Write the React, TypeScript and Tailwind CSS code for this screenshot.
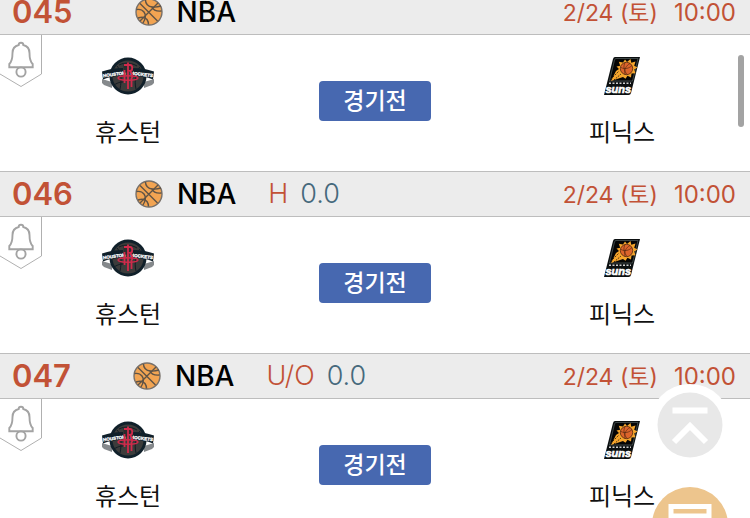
import React from 'react';

type Game = {
  no: string;
  type?: string;
  line?: string;
};

const games: Game[] = [
  { no: '045' },
  { no: '046', type: 'H', line: '0.0' },
  { no: '047', type: 'U/O', line: '0.0' },
];

const BallIcon: React.FC = () => (
  <svg viewBox="0 0 28 28" className="w-7 h-7 shrink-0" fill="none" stroke="#5f5346" strokeWidth="1.4">
    <circle cx="14" cy="14" r="13" fill="#f2a452" stroke="#77706a" />
    <path d="M5 5.500L22.500 23M23 5L5 23" />
    <path d="M10.500 2c0 4 2.500 6.500 7 7 3.500.4 6-.2 8.500-1" />
    <path d="M17 9c1 2.500 4.500 4.500 9.500 4" />
    <path d="M1.500 11.500c3.500-.5 6 .5 7.500 2.500s2 6-1 11" />
    <path d="M3 20c3-1 7-1 9 1.500 1 1.500 1.500 3 1.500 5" />
  </svg>
);

const BellTag: React.FC = () => (
  <svg viewBox="0 0 42 52" className="block w-[42px] h-[52px]" fill="none">
    <path d="M41.500 0v39L21 51.500 0 39" stroke="#b0b0b0" />
    <path
      d="M21 7.800c-1.500 0-2.300.9-2.300 2.200C14.500 11 12.500 14 12.500 18c0 6-.5 8.500-3.200 11v3.300h23.400V29c-2.700-2.500-3.200-5-3.200-11 0-4-2-7-6.200-8 0-1.300-.8-2.200-2.300-2.200z"
      stroke="#a3a3a3"
      strokeWidth="1.900"
    />
    <circle cx="21" cy="37" r="4.600" stroke="#a3a3a3" strokeWidth="1.900" />
  </svg>
);

const RocketsLogo: React.FC = () => (
  <svg viewBox="0 0 52 38" className="w-[52px] h-[38px]">
    <path d="M0 22l10 3v6L2 28l-2-2zM52 22l-10 3v6l8-3 2-2z" fill="#85898c" />
    <circle cx="26" cy="19" r="18.500" fill="#10202a" />
    <circle cx="26" cy="19" r="15.500" fill="#3c3c3b" />
    <path
      d="M15 9c4 4 5 14 3 23M38 10c-4 4-6 14-4 22M17 8c6-3 13-2 18 1M12 28c5-3 7-3 10-3"
      fill="none"
      stroke="#111c24"
      strokeWidth="1"
    />
    <path
      d="M0 14.500c7-2.500 14-3.500 21-3.500v7.500c-7 .3-14 1.500-20 4zM52 14.500c-7-2.500-14-3.500-21-3.500v7.500c7 .3 14 1.500 20 4z"
      fill="#10202a"
    />
    <g fill="#fff" stroke="#fff" strokeWidth=".3" fontFamily="Liberation Sans, sans-serif" fontWeight="700" fontSize="4.500">
      <text x="1" y="19" textAnchor="start" transform="rotate(-7 11 17)">HOUSTON</text>
      <text x="51" y="19" textAnchor="end" transform="rotate(7 41 17)">ROCKETS</text>
    </g>
    <path d="M21.500 6.500h9.500v9h-9.500z" fill="#2a2c2d" />
    <path d="M22 8h6c3 0 3 6 0 6l2 3v4M22.500 13v13M26 5.500V32M29.500 21v9" fill="none" stroke="#d02a4b" strokeWidth="1.800" />
    <ellipse cx="26" cy="21" rx="10" ry="2.300" fill="none" stroke="#d02a4b" strokeWidth="1.400" />
  </svg>
);

const SunsLogo: React.FC = () => (
  <svg viewBox="0 0 38 38" className="w-[38px] h-[38px]">
    <path d="M12 0h25l-9 36q-.5 2-2.500 2H1L10 2q.5-2 2-2z" fill="#0b0f10" />
    <path d="M12.500 1.500h22.500L29.500 24H6.500L11.500 3z" fill="#050505" stroke="#53605f" strokeWidth=".7" />
    <path
      d="M22 2.500l2 2.500 3.500-3 .8 3.800 4.200-1.300-1.300 4.200 3.300 1.800-3.300 2 1.300 3.800-4 .2-.5 4-3.500-1.800-2 3-2.500-1.700L8 24l5-10 3-2-2.500-2.500 3.700-.8-1.400-4 4.200.8z"
      fill="#f5a52c"
    />
    <path d="M8 22l8-8M11 23l7-6" stroke="#2b1c0c" strokeWidth=".9" strokeDasharray="1.500 1.200" />
    <circle cx="23.500" cy="11.500" r="6.200" fill="#dc642b" stroke="#42200e" strokeWidth=".7" />
    <path
      d="M18 10.500c4 2 8 1 11-2M22 5.500c-2 4-1 8 2 12M27 6.500c-4 2-6 6-5 11"
      fill="none"
      stroke="#42200e"
      strokeWidth=".6"
    />
    <path d="M6 26.200h22" stroke="#cfcfcf" strokeWidth="1.500" strokeDasharray="2 1.500" />
    <text
      x="2.500"
      y="36"
      fill="#fff"
      stroke="#fff"
      strokeWidth=".6"
      fontFamily="Liberation Sans, sans-serif"
      fontWeight="700"
      fontStyle="italic"
      fontSize="11"
    >
      suns
    </text>
  </svg>
);

const Team: React.FC<{ name: string; children: React.ReactNode }> = ({ name, children }) => (
  <div className="flex w-64 flex-col items-center pt-[22px]">
    {children}
    <span className="mt-5 text-[24px] leading-9 text-[#111]">{name}</span>
  </div>
);

const GameRow: React.FC<{ game: Game }> = ({ game }) => (
  <li>
    <div className="flex h-[46px] items-center border-y border-[#bdbdbd] bg-[#ececec] pl-3 pr-[14px]">
      <span className="text-[31px] font-semibold text-[#c25236]">{game.no}</span>
      <span className="ml-[62px] flex items-center gap-[14px]">
        <BallIcon />
        <span className="text-[28px] font-medium text-black">NBA</span>
      </span>
      {game.type && <span className="ml-8 text-[27px] font-light text-[#c25236]">{game.type}</span>}
      {game.line && <span className="ml-3 text-[27px] font-light text-[#46697c]">{game.line}</span>}
      <span className="ml-auto flex items-center gap-4 pt-0.5 text-[#c25236]">
        <span className="text-[23px]">2/24 (토)</span>
        <time className="text-[24px]">10:00</time>
      </span>
    </div>
    <div className="relative flex h-[136px] justify-between">
      <button type="button" aria-label="알림" className="absolute left-0 top-0">
        <BellTag />
      </button>
      <Team name="휴스턴">
        <RocketsLogo />
      </Team>
      <button
        type="button"
        className="mt-[46px] h-10 w-28 rounded bg-[#4768b0] text-[23px] leading-10 font-medium text-white"
      >
        경기전
      </button>
      <Team name="피닉스">
        <SunsLogo />
      </Team>
    </div>
  </li>
);

export default function App() {
  return (
    <main className="relative h-screen overflow-hidden bg-white font-['Inter','Noto_Sans_CJK_KR',sans-serif]">
      <ul className="-mt-[11px]">
        {games.map((game) => (
          <GameRow key={game.no} game={game} />
        ))}
      </ul>

      <div className="absolute right-[6px] top-[55px] h-[72px] w-[6px] rounded-full bg-[#a3a3a3]" />

      {/* floating buttons */}
      <div className="absolute right-[19px] top-[384px] flex flex-col items-center gap-[21px]">
        <button type="button" aria-label="맨 위로" className="rounded-full bg-white p-2">
          <svg viewBox="0 0 66 66" className="block h-[66px] w-[66px]">
            <circle cx="33" cy="33" r="32.500" fill="#e8e8e8" />
            <path d="M15.500 18.500h35M17 50l16-16 16 16" fill="none" stroke="#fff" strokeWidth="6" />
          </svg>
        </button>
        <button type="button" aria-label="메뉴" className="rounded-full bg-[#edc58d]">
          <svg viewBox="0 0 76 76" className="block h-[76px] w-[76px]" fill="none" stroke="#fff" strokeWidth="5">
            <path d="M19 60V19.500h38V60zM21 29h34" />
          </svg>
        </button>
      </div>
    </main>
  );
}
